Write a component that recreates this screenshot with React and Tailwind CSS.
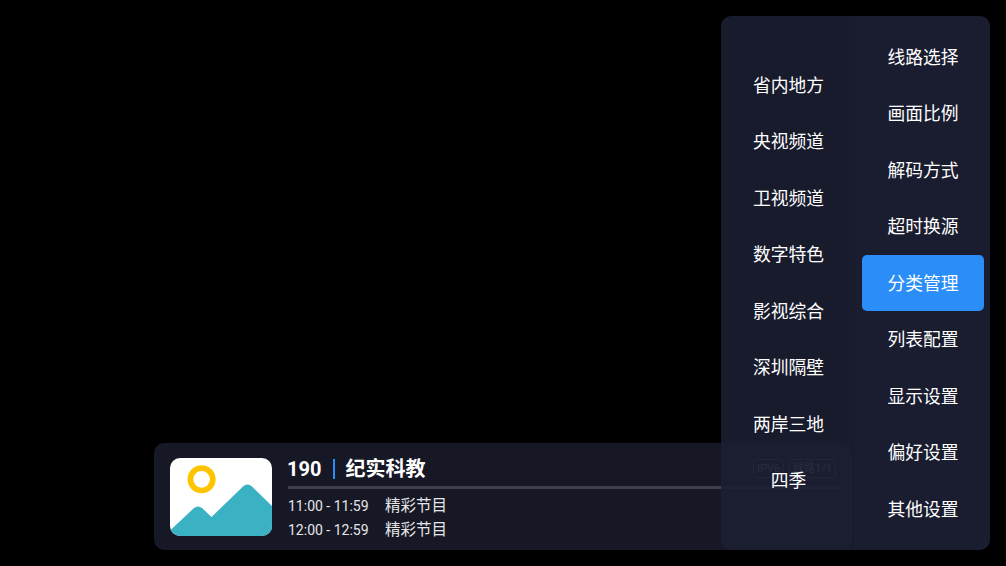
const font = "font-['Roboto','Noto_Sans_CJK_SC',sans-serif]";

const categories = ['省内地方', '央视频道', '卫视频道', '数字特色', '影视综合', '深圳隔壁', '两岸三地', '四季'];
const settings = ['线路选择', '画面比例', '解码方式', '超时换源', '分类管理', '列表配置', '显示设置', '偏好设置', '其他设置'];

const Placeholder = () => (
  <svg viewBox="0 0 102 78" className="h-[78px] w-[102px] shrink-0 rounded-[10px]">
    <rect width="102" height="78" fill="#ffffff" />
    <circle cx="31.6" cy="21.3" r="11.2" fill="none" stroke="#ffc400" strokeWidth="5.7" />
    <path
      d="M0 72.5 L24 50 Q28 47 32 50 L41.5 59 L73 28.5 Q77.5 24.5 82 28.5 L102 48 V78 H0 Z"
      fill="#3ab2c3"
    />
  </svg>
);

const Tag = ({ children }) => (
  <span className="flex h-[19px] items-center rounded-[3px] border border-white/25 px-[3px] text-[11px] leading-none text-white/50">
    {children}
  </span>
);

const Programme = ({ time }) => (
  <div className="flex h-[24.5px] items-center text-sm text-[#e6e6e8]">
    <span className="w-[97px]">{time}</span>
    <span className="text-[15.5px]">精彩节目</span>
  </div>
);

const InfoBar = () => (
  <div className="absolute left-[154px] top-[443px] flex h-[107px] w-[698px] items-start gap-4 rounded-[10px] bg-[#161826] pl-4 pr-[10px] pt-[15px]">
    <Placeholder />
    <div className="min-w-0 flex-1">
      <div className="flex h-[21px] items-center text-white">
        <span className="-ml-px text-xl font-bold">190</span>
        <span className="ml-3 h-5 w-[2px] bg-[#2b8ef8]" />
        <span className="ml-[10px] text-xl font-bold">纪实科教</span>
        <div className="ml-auto mr-[6px] flex gap-[5px] font-normal">
          <Tag>IPV6</Tag>
          <Tag>线路1/1</Tag>
        </div>
      </div>
      <div className="mt-[7px] h-[2.5px] bg-[#3d3f4a]" />
      <div className="mt-[5px]">
        <Programme time="11:00 - 11:59" />
        <Programme time="12:00 - 12:59" />
      </div>
    </div>
  </div>
);

const MenuColumn = ({ items, active, className }) => (
  <div className={`flex flex-col justify-center ${className}`}>
    {items.map((item) => (
      <div
        key={item}
        className={`ml-[7px] mr-[6px] flex h-[56.5px] shrink-0 items-center justify-center rounded-[5px] pt-[2px] text-[17.8px] text-white ${item === active ? 'bg-[#2b8ef8]' : ''}`}
      >
        {item}
      </div>
    ))}
  </div>
);

const Menu = () => (
  <div className="absolute left-[721px] top-4 flex h-[534px] w-[269px] overflow-hidden rounded-[10px]">
    <MenuColumn items={categories} className="w-[134px] bg-[#1b1f32]/88" />
    <MenuColumn items={settings} active="分类管理" className="w-[135px] bg-[#1a1c2f]" />
  </div>
);

export default function App() {
  return (
    <div className={`relative h-screen w-screen overflow-hidden bg-black ${font}`}>
      <InfoBar />
      <Menu />
    </div>
  );
}
